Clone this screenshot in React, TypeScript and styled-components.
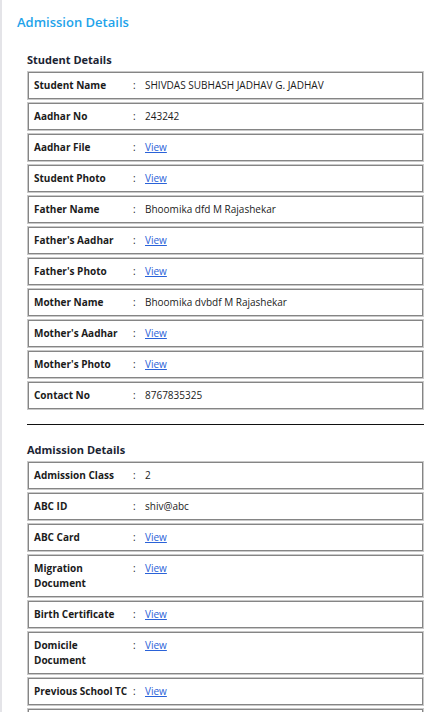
import React from "react";
import styled, { createGlobalStyle } from "styled-components";

const Global = createGlobalStyle`
  html, body { margin: 0; padding: 0; background: #ffffff; }
  body { font-family: "Open Sans", "Noto Sans", sans-serif; }
`;

const Page = styled.div`
  box-sizing: border-box;
  min-height: 712px;
  border-left: 2px solid #e4e4e8;
  padding: 12px 22px 0 15px;
`;

const Title = styled.h1`
  margin: 0 0 20px 0;
  font-size: 13px;
  font-weight: 600;
  line-height: 20px;
  color: #1ea3ea;
`;

const Section = styled.section`
  padding-left: 10px;
`;

const SectionTitle = styled.h2`
  margin: 0 0 3px 0;
  font-size: 11px;
  font-weight: 700;
  line-height: 16px;
  color: #1b2433;
`;

const Rows = styled.div`
  display: flex;
  flex-direction: column;
  gap: 2px;
`;

const Row = styled.div`
  box-sizing: border-box;
  display: grid;
  grid-template-columns: 100px 12px 1fr;
  align-items: start;
  padding: 6px 6px 6px 5px;
  border: 1px solid #c9c9c9;
  box-shadow: inset 0 0 0 1px #858585;
  background: #fff;
  font-size: 10px;
  line-height: 15px;
  color: #1b1b1b;
`;

const Label = styled.div`
  font-weight: 700;
  padding-left: 1px;
  padding-right: 2px;
`;

const Colon = styled.div`
  text-align: left;
`;

const Value = styled.div``;

const ViewLink = styled.a`
  color: #2a62d8;
  text-decoration: underline;
  cursor: pointer;
`;

const Divider = styled.hr`
  margin: 14px 0 17px 0;
  border: 0;
  border-top: 1px solid #111;
`;

type Item = { label: string; value?: string; link?: boolean };

const student: Item[] = [
  { label: "Student Name", value: "SHIVDAS SUBHASH JADHAV G. JADHAV" },
  { label: "Aadhar No", value: "243242" },
  { label: "Aadhar File", link: true },
  { label: "Student Photo", link: true },
  { label: "Father Name", value: "Bhoomika dfd M Rajashekar" },
  { label: "Father's Aadhar", link: true },
  { label: "Father's Photo", link: true },
  { label: "Mother Name", value: "Bhoomika dvbdf M Rajashekar" },
  { label: "Mother's Aadhar", link: true },
  { label: "Mother's Photo", link: true },
  { label: "Contact No", value: "8767835325" },
];

const admission: Item[] = [
  { label: "Admission Class", value: "2" },
  { label: "ABC ID", value: "shiv@abc" },
  { label: "ABC Card", link: true },
  { label: "Migration Document", link: true },
  { label: "Birth Certificate", link: true },
  { label: "Domicile Document", link: true },
  { label: "Previous School TC", link: true },
  { label: "Caste Certificate", link: true },
];

const RowList = ({ items }: { items: Item[] }) => (
  <Rows>
    {items.map((it) => (
      <Row key={it.label}>
        <Label>{it.label}</Label>
        <Colon>:</Colon>
        <Value>{it.link ? <ViewLink>View</ViewLink> : it.value}</Value>
      </Row>
    ))}
  </Rows>
);

export default function App() {
  return (
    <>
      <Global />
      <Page>
        <Title>Admission Details</Title>
        <Section>
          <SectionTitle>Student Details</SectionTitle>
          <RowList items={student} />
          <Divider />
          <SectionTitle>Admission Details</SectionTitle>
          <RowList items={admission} />
        </Section>
      </Page>
    </>
  );
}
